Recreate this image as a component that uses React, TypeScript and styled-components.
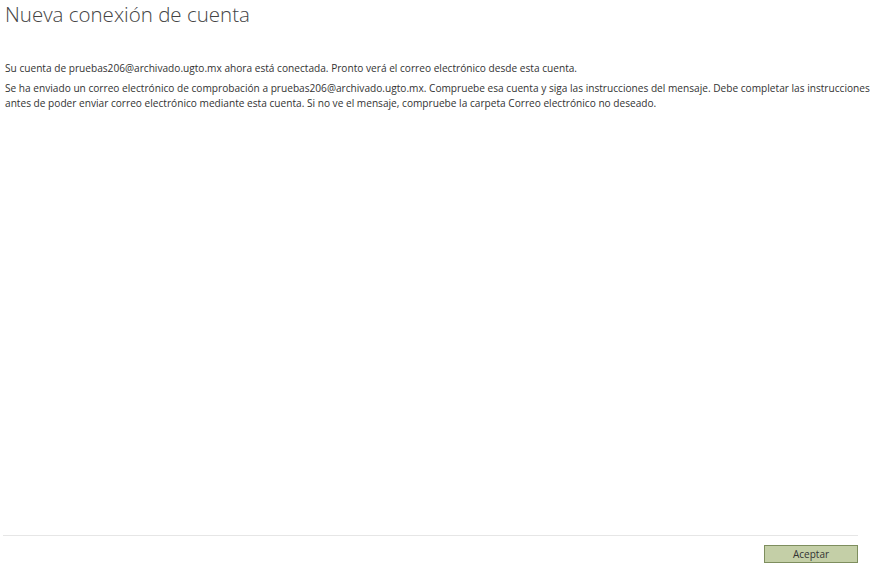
import React from 'react'
import styled, { createGlobalStyle } from 'styled-components'

const GlobalStyle = createGlobalStyle`
    html, body {
        margin: 0;
        padding: 0;
        background: #ffffff;
    }
    body {
        font-family: "Open Sans", "Noto Sans", sans-serif;
        color: #333333;
    }
`

const Page = styled.div`
    display: flex;
    flex-direction: column;
    height: 569px;
    box-sizing: border-box;
    padding: 0 0 0 3px;
`

const Content = styled.div`
    flex: 1;
    padding: 0 4px 0 2px;
`

const Title = styled.h1`
    margin: 0;
    padding-top: 1px;
    font-size: 20.5px;
    font-weight: 300;
    color: #444444;
    line-height: 26px;
`

const Paragraph = styled.p`
    margin: ${props => props.$first ? '34px' : '5px'} 0 0 0;
    font-size: 10.15px;
    line-height: 15px;
    color: #333333;
`

const Footer = styled.div`
    border-top: 1px solid #e6e6e6;
    display: flex;
    justify-content: flex-end;
    margin-right: 21px;
    padding: 9px 0 6px;
`

const Button = styled.button`
    width: 94px;
    height: 18px;
    box-sizing: border-box;
    background: #c4cfa7;
    border: 1px solid #7e8e5e;
    font-family: "Open Sans", "Noto Sans", sans-serif;
    font-size: 10px;
    color: #333333;
    padding: 0;
    cursor: pointer;
`

const App = () => {
    return (
        <>
            <GlobalStyle />
            <Page>
                <Content>
                    <Title>Nueva conexión de cuenta</Title>
                    <Paragraph $first>
                        Su cuenta de pruebas206@archivado.ugto.mx ahora está conectada. Pronto verá el correo electrónico desde esta cuenta.
                    </Paragraph>
                    <Paragraph>
                        Se ha enviado un correo electrónico de comprobación a pruebas206@archivado.ugto.mx. Compruebe esa cuenta y siga las instrucciones del mensaje. Debe completar las instrucciones antes de poder enviar correo electrónico mediante esta cuenta. Si no ve el mensaje, compruebe la carpeta Correo electrónico no deseado.
                    </Paragraph>
                </Content>
                <Footer>
                    <Button>Aceptar</Button>
                </Footer>
            </Page>
        </>
    )
}

export default App
